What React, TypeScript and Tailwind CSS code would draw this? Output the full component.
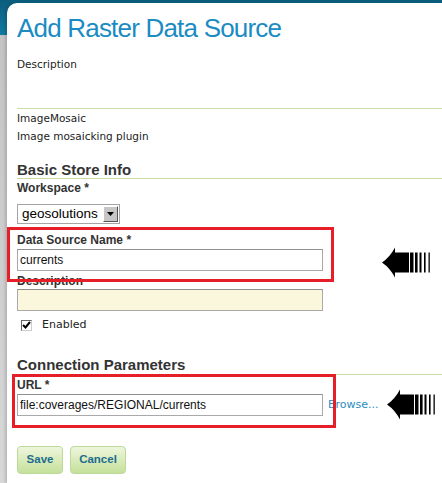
import React from "react";

const body = { fontFamily: '"DejaVu Sans", Verdana, sans-serif' };
const arial = { fontFamily: '"Liberation Sans", Arial, sans-serif' };

const Arrow = ({ className }: { className: string }) => (
  <svg className={className} width="56" height="32" viewBox="0 0 56 32">
    <path d="M1 15.5 Q9 10 14 0.5 L14 5.5 L28 5.5 L28 25.5 L14 25.5 L14 30.5 Q9 21 1 15.5 Z" fill="#000" />
    <rect x="29" y="5.5" width="3.5" height="20" fill="#000" />
    <rect x="34" y="5.5" width="2.6" height="20" fill="#000" />
    <rect x="38.5" y="5.5" width="2" height="20" fill="#000" />
    <rect x="43" y="5.5" width="1.6" height="20" fill="#000" />
    <rect x="47.5" y="5.5" width="1.3" height="20" fill="#000" />
  </svg>
);

const Label = ({ children }: { children: React.ReactNode }) => (
  <div style={arial} className="text-[12px] leading-[14px] font-bold text-[#333]">
    {children}
  </div>
);

const TextInput = ({ value, yellow }: { value?: string; yellow?: boolean }) => (
  <div
    style={arial}
    className={`w-[306px] h-[22px] border border-[#a9a9a9] border-t-[#8f8f8f] px-[2px] flex items-center text-[12px] text-[#111] ${
      yellow ? "bg-[#fbf7dc]" : "bg-white"
    }`}
  >
    {value}
  </div>
);

export default function App() {
  return (
    <div className="relative w-[442px] h-[483px] overflow-hidden bg-[linear-gradient(to_bottom,#0b5d7d_0px,#137aa1_35px,#c4c4c4_35px,#d8d8d8_483px)]">
      <div className="ml-[7px] mt-[3px] h-[480px] rounded-tl-[10px] bg-white pl-[10px] shadow-[-2px_0_3px_rgba(0,0,0,0.15)]">
        <h1
          style={arial}
          className="pt-[10px] text-[26px] leading-[30px] tracking-[-0.8px] text-[#1b8bc3]"
        >
          Add Raster Data Source
        </h1>
        <div style={body} className="mt-[14px] text-[10.5px] leading-[14px] text-[#222]">
          Description
        </div>
        <div className="mt-[37px] border-t border-[#c9dca7]" />
        <div style={body} className="text-[10.5px] leading-[18px] text-[#222]">
          <div>ImageMosaic</div>
          <div>Image mosaicking plugin</div>
        </div>

        <h2
          style={arial}
          className="mt-[16px] text-[15px] leading-[17px] font-bold text-[#333] border-b border-[#c9dca7]"
        >
          Basic Store Info
        </h2>
        <div className="mt-[2px]">
          <Label>Workspace *</Label>
        </div>
        <div className="mt-[9px] w-[103px] h-[20px] border border-[#a5a5a5] flex items-center justify-between pl-[4px] pr-[1px] bg-white">
          <span style={arial} className="text-[13.5px] text-black leading-none">
            geosolutions
          </span>
          <span className="w-[15px] h-[16px] bg-[#c6c6c6] border border-t-white border-l-white border-r-[#555] border-b-[#555] flex items-center justify-center">
            <svg width="7" height="4" viewBox="0 0 7 4">
              <path d="M0 0 L7 0 L3.5 4 Z" fill="#000" />
            </svg>
          </span>
        </div>
        <div className="mt-[9px]">
          <Label>Data Source Name *</Label>
        </div>
        <div className="mt-[2px]">
          <TextInput value="currents" />
        </div>
        <div className="mt-[3px]">
          <Label>Description</Label>
        </div>
        <div className="mt-[1px]">
          <TextInput yellow />
        </div>
        <div className="mt-[7px] flex items-center h-[14px]">
          <span className="ml-[4px] w-[11px] h-[11px] border border-[#666] border-r-[#ccc] border-b-[#ccc] bg-white flex items-center justify-center">
            <svg width="9" height="8" viewBox="0 0 9 8">
              <path d="M1 4 L3.5 6.5 L8 1" stroke="#000" strokeWidth="2" fill="none" />
            </svg>
          </span>
          <span style={body} className="ml-[10px] text-[11px] text-[#222]">
            Enabled
          </span>
        </div>

        <h2
          style={arial}
          className="mt-[23px] text-[15px] leading-[19px] font-bold text-[#333] border-b border-[#c9dca7]"
        >
          Connection Parameters
        </h2>
        <div className="mt-[3px]">
          <Label>URL *</Label>
        </div>
        <div className="mt-[2px] flex items-center">
          <TextInput value="file:coverages/REGIONAL/currents" />
          <span style={body} className="ml-[5px] text-[11px] text-[#2a8cc2]">
            Browse...
          </span>
        </div>

        <div className="mt-[30px] flex gap-[7px]">
          <button
            style={arial}
            className="w-[46px] h-[28px] rounded-[4px] border border-[#bcd99a] bg-[linear-gradient(to_bottom,#eef6dc,#c5e09a)] text-[11.5px] font-bold text-[#1d6d8e]"
          >
            Save
          </button>
          <button
            style={arial}
            className="w-[56px] h-[28px] rounded-[4px] border border-[#bcd99a] bg-[linear-gradient(to_bottom,#eef6dc,#c5e09a)] text-[11.5px] font-bold text-[#1d6d8e]"
          >
            Cancel
          </button>
        </div>
      </div>

      {/* annotation boxes */}
      <div className="absolute left-[7px] top-[227px] w-[327px] h-[55px] border-[3px] border-[#e61e28]" />
      <div className="absolute left-[12px] top-[374px] w-[324px] h-[54px] border-[3px] border-[#e61e28]" />
      <Arrow className="absolute left-[381px] top-[247px]" />
      <Arrow className="absolute left-[386px] top-[389px]" />
    </div>
  );
}
